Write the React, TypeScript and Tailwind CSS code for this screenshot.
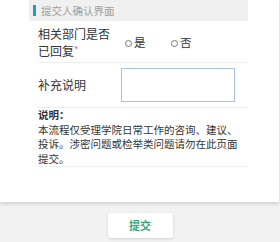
import React from 'react'

export default function App() {
  return (
    <div className="w-[280px] h-[242px] bg-[#f2f2f2] overflow-hidden font-['Noto_Sans_CJK_SC',sans-serif]">
      {/* Form panel */}
      <div className="h-[202px] w-[279px] bg-white shadow-[0_2px_4px_rgba(0,0,0,0.15)]">
        <div className="ml-[29px] w-[219px]">
          <div className="h-[21px] bg-[#f0f0f0] flex items-center pl-[4px]">
            <div className="w-[3px] h-[11px] bg-[#1a9fc6]"></div>
            <span className="ml-[5px] text-[10.5px] text-[#a0a0a0]">提交人确认界面</span>
          </div>

          <div className="pl-[9px]">
            {/* Reply row */}
            <div className="h-[42px] flex items-center border-b border-[#eeeeee]">
              <div className="w-[83px] text-[12px] leading-[17px] text-[#333] pt-[1px]">
                <div>相关部门是否</div>
                <div className="flex items-start">
                  已回复<span className="text-[#e55] text-[9px] leading-[10px] mt-[3px]">*</span>
                </div>
              </div>
              <label className="flex items-center text-[11.5px] text-[#333] w-[50px] pt-[3px]">
                <span className="w-[7px] h-[7px] rounded-full border border-[#777] mr-[2px] ml-[4px]"></span>
                是
              </label>
              <label className="flex items-center text-[11.5px] text-[#333] pt-[3px]">
                <span className="w-[7px] h-[7px] rounded-full border border-[#777] mr-[2px]"></span>
                否
              </label>
            </div>

            {/* Extra note row */}
            <div className="h-[45px] flex items-center border-b border-[#eeeeee]">
              <div className="w-[83px] text-[12px] text-[#333]">补充说明</div>
              <div className="w-[114px] h-[34px] border border-[#a8c0de]"></div>
            </div>

            {/* Notice */}
            <div className="border-b border-[#eeeeee] text-[10.5px] leading-[14.5px] text-[#333]">
              <div className="font-bold">说明：</div>
              <div className="w-[205px]">本流程仅受理学院日常工作的咨询、建议、投诉。涉密问题或检举类问题请勿在此页面提交。</div>
            </div>
          </div>
        </div>
      </div>

      <div className="flex justify-center mt-[11px]">
        <button className="w-[65px] h-[25px] bg-white rounded-[2px] shadow-[0_1px_3px_rgba(0,0,0,0.15)] text-[11px] font-bold text-[#33a878]">
          提交
        </button>
      </div>
    </div>
  )
}
